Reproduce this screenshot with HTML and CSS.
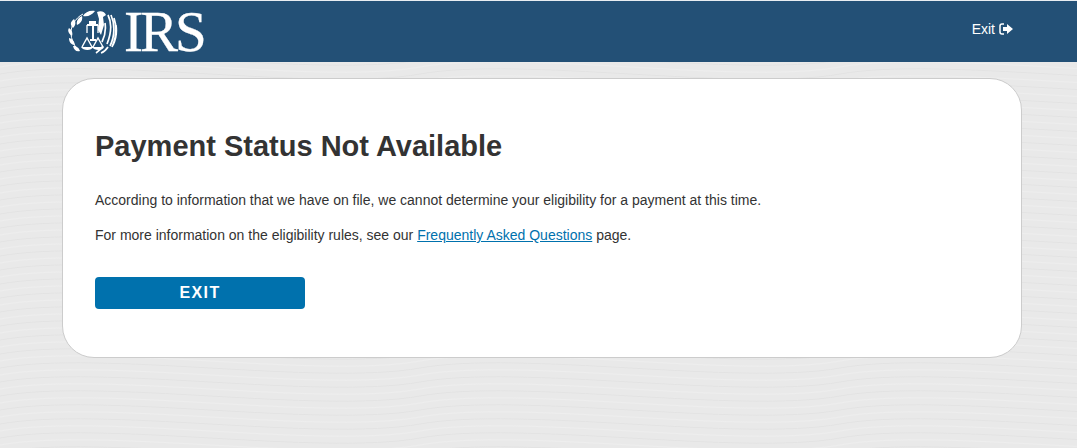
FILE: index.html
```html
<!DOCTYPE html>
<html lang="en">
<head>
    <meta charset="UTF-8">
    <meta name="viewport" content="width=device-width, initial-scale=1.0">
    <title>Payment Status Not Available</title>
    <link rel="stylesheet" href="styles.css">
</head>
<body>

<header class="site-header">
    <div class="logo">
        <svg class="seal" width="50" height="44" viewBox="0 0 50 44" fill="none" stroke="#fff">
            <!-- laurel branch -->
            <path d="M11 41C3 33 1 22 5 14 8 9 11 6 15 4" stroke-width="1"/>
            <path d="M27 1c-3 4-7 6-12 5 2-4 7-6 12-5zM14 6c1 4-1 7-5 9-1-4 1-7 5-9zM6 9c2 3 2 6-1 9-3-3-3-6 1-9zM1 18c3 2 4 5 3 8-3-2-5-5-3-8zM1 28c4 1 5 3 6 7-4 0-6-3-6-7zM5 36c4 0 6 2 7 5-4 1-6-1-7-5z" fill="#fff" stroke="none"/>
            <!-- scales -->
            <path d="M19 15h11M25 15v15" stroke-width="2"/>
            <path d="M21 11h7v3h-7z" fill="#fff" stroke="none"/>
            <path d="M19 15v8M30 15v8" stroke-width="1.3"/>
            <path d="M14 37l5-9 5 9M25 37l5-9 5 9" stroke-width="1.4"/>
            <path d="M13 37h12c-1 4-10 4-12 0zM24 37h12c-1 4-10 4-12 0z" fill="#fff" stroke="none"/>
            <path d="M22 29h6v2h-6z" fill="#fff" stroke="none"/>
            <!-- eagle -->
            <path d="M29 2c4-2 8 0 9 3l-3 2 1 8-3 10-3-5 1-11z" fill="#fff" stroke="none"/>
            <path d="M37 13c1 6 0 13-3 19M40 5c4 8 3 19-1 29M43 5c4 9 4 21-1 31M46 8c3 9 2 20-2 29M48 15c1 7 0 14-3 20M35 36c-2 3-4 5-7 7M40 37c-2 3-4 5-7 6" stroke-width="1.7"/>
        </svg>
        <span class="logo-text">IRS</span>
    </div>
    <a class="header-exit" href="#">Exit
        <svg class="exit-icon" width="14" height="12" viewBox="0 0 14 12">
            <path d="M5 1H3a2 2 0 0 0-2 2v6a2 2 0 0 0 2 2h2" fill="none" stroke="#fff" stroke-width="1.5"/>
            <path d="M4 4h4V1l6 5-6 5V8H4z" fill="#fff"/>
        </svg>
    </a>
</header>

<main class="card">
    <h1>Payment Status Not Available</h1>
    <p>According to information that we have on file, we cannot determine your eligibility for a payment at this time.</p>
    <p>For more information on the eligibility rules, see our <a href="#">Frequently Asked Questions</a> page.</p>
    <a class="exit-button" href="#">EXIT</a>
</main>

</body>
</html>
```

FILE: styles.css
```css
body {
    margin: 0;
    height: 448px;
    overflow: hidden;
    font-family: "Liberation Sans", Arial, sans-serif;
    color: #333;
    background-color: #e9e9e9;
    background-image: url("data:image/svg+xml,%3Csvg xmlns='http://www.w3.org/2000/svg' width='420' height='56'%3E%3Cg fill='none' stroke='%23e3e3e3' stroke-width='1'%3E%3Cpath d='M0 4C100 -14 320 22 420 4'/%3E%3Cpath d='M0 18C100 0 320 36 420 18'/%3E%3Cpath d='M0 32C100 14 320 50 420 32'/%3E%3Cpath d='M0 46C100 28 320 64 420 46'/%3E%3Cpath d='M0 60C100 42 320 78 420 60'/%3E%3C/g%3E%3Cg fill='none' stroke='%23eeeeee' stroke-width='1'%3E%3Cpath d='M0 11C100 -7 320 29 420 11'/%3E%3Cpath d='M0 25C100 7 320 43 420 25'/%3E%3Cpath d='M0 39C100 21 320 57 420 39'/%3E%3Cpath d='M0 53C100 35 320 71 420 53'/%3E%3Cpath d='M0 -3C100 -21 320 15 420 -3'/%3E%3C/g%3E%3C/svg%3E");
}

.site-header {
    height: 61px;
    border-top: 1px solid #e8edf2;
    background-color: #235076;
    display: flex;
    justify-content: space-between;
    align-items: center;
    padding: 0 64px 0 68px;
}

.logo {
    display: flex;
    align-items: center;
    gap: 6px;
}

.logo-text {
    font-family: "Liberation Serif", "Times New Roman", serif;
    font-size: 57px;
    line-height: 50px;
    letter-spacing: -3px;
    color: #fff;
    -webkit-text-stroke: 0.3px #fff;
}

.header-exit {
    display: flex;
    align-items: center;
    gap: 4px;
    padding-bottom: 6px;
    color: #fff;
    font-size: 14px;
    text-decoration: none;
}

.card {
    width: 894px;
    height: 214px;
    margin: 16px 0 0 62px;
    padding: 32px;
    background-color: #fff;
    border: 1px solid #ccc;
    border-radius: 32px;
}

h1 {
    margin: 18px 0 29px;
    font-size: 29px;
    line-height: 34px;
    color: #333;
}

p {
    margin: 0 0 19px;
    font-size: 14px;
    line-height: 16px;
}

p a {
    color: #0071ad;
}

.exit-button {
    display: block;
    width: 210px;
    height: 32px;
    margin-top: 34px;
    background-color: #0071ad;
    border-radius: 4px;
    color: #fff;
    font-size: 16px;
    font-weight: bold;
    line-height: 32px;
    letter-spacing: 1.4px;
    text-align: center;
    text-decoration: none;
}
```
